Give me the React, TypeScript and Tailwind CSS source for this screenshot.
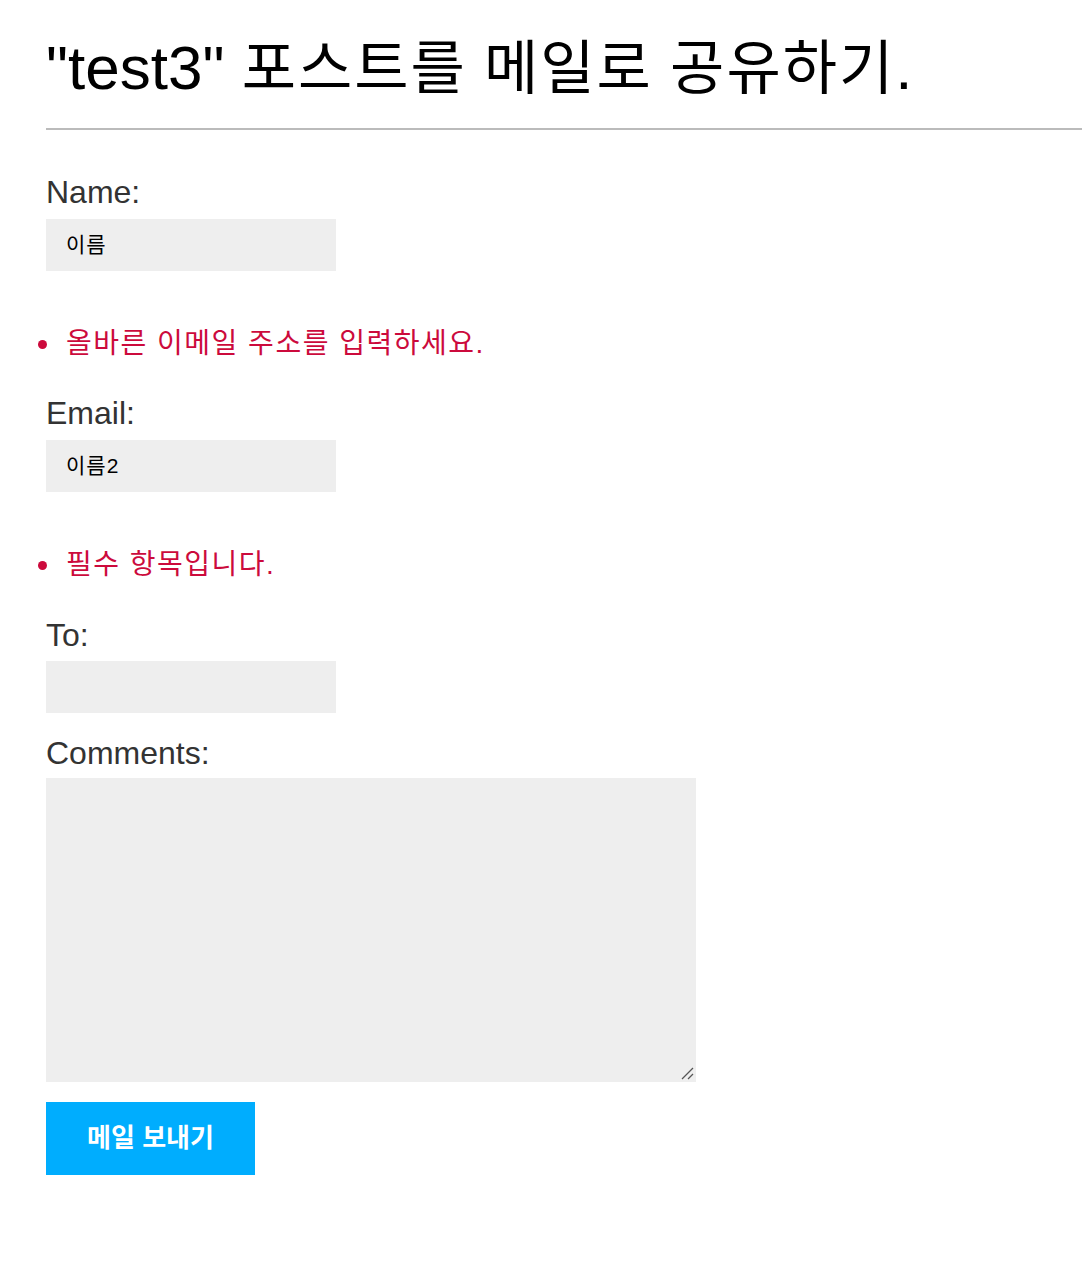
import React from "react";

const font = { fontFamily: '"Liberation Sans", Arial, "Noto Sans CJK KR", sans-serif' };

function ErrorLine({ text }: { text: string }) {
  return (
    <div className="flex items-center h-[36px] text-[28px] leading-[36px] text-[#cc0a3c] tracking-[1.5px]">
      <span className="w-[9px] h-[9px] rounded-full bg-[#cc0a3c] ml-[38px] mr-[19px] shrink-0" />
      <span>{text}</span>
    </div>
  );
}

function Label({ text }: { text: string }) {
  return <div className="ml-[46px] text-[32px] leading-[36px] h-[36px] text-[#333]">{text}</div>;
}

function Field({ value }: { value: string }) {
  return (
    <div className="ml-[46px] w-[290px] h-[52px] bg-[#eeeeee] flex items-center pl-[20px] text-[21px] tracking-[1px] text-black">
      {value}
    </div>
  );
}

function K({ children }: { children: React.ReactNode }) {
  return <span className="text-[59px] tracking-[2px]">{children}</span>;
}

export default function App() {
  return (
    <div className="w-[1082px] h-[1268px] bg-white overflow-hidden" style={font}>
      <div className="pt-[36px]">
        <h1 className="ml-[46px] text-[62px] leading-[64px] h-[64px] text-black font-normal whitespace-nowrap">
          "test3"&nbsp;<K>포스트를</K>&nbsp;<K>메일로</K>&nbsp;<K>공유하기</K>.
        </h1>
        <div className="ml-[46px] mt-[28px] h-[2px] bg-[#bbbbbb]" />
        <div className="mt-[44px]">
          <Label text="Name:" />
          <div className="mt-[9px]">
            <Field value="이름" />
          </div>
        </div>
        <div className="mt-[55px]">
          <ErrorLine text="올바른 이메일 주소를 입력하세요." />
        </div>
        <div className="mt-[33px]">
          <Label text="Email:" />
          <div className="mt-[9px]">
            <Field value="이름2" />
          </div>
        </div>
        <div className="mt-[55px]">
          <ErrorLine text="필수 항목입니다." />
        </div>
        <div className="mt-[34px]">
          <Label text="To:" />
          <div className="mt-[8px]">
            <Field value="" />
          </div>
        </div>
        <div className="mt-[22px]">
          <Label text="Comments:" />
          <div className="mt-[7px] ml-[46px] w-[650px] h-[304px] bg-[#eeeeee] relative">
            <svg className="absolute right-[2px] bottom-[2px]" width="14" height="14" viewBox="0 0 14 14">
              <line x1="2" y1="13" x2="13" y2="2" stroke="#555" strokeWidth="1.2" />
              <line x1="8" y1="13" x2="13" y2="8" stroke="#555" strokeWidth="1.2" />
            </svg>
          </div>
        </div>
        <button className="mt-[20px] ml-[46px] w-[209px] h-[73px] bg-[#00adfe] text-white text-[26px] font-bold flex items-center justify-center">
          메일 보내기
        </button>
      </div>
    </div>
  );
}
